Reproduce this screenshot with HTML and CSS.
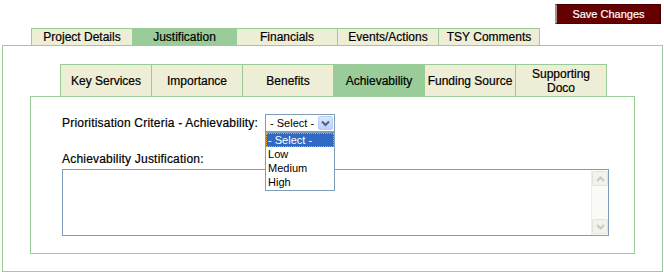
FILE: index.html
```html
<!DOCTYPE html>
<html>
<head>
  <title>Project Justification</title>
  <link rel="stylesheet" href="styles.css">
</head>
<body>
  <div class="topbar">
    <button class="save-btn">Save Changes</button>
  </div>

  <div class="tabs main-tabs">
    <div class="tab">Project Details</div>
    <div class="tab active wide">Justification</div>
    <div class="tab">Financials</div>
    <div class="tab">Events/Actions</div>
    <div class="tab">TSY Comments</div>
  </div>

  <div class="panel outer-panel">
    <div class="tabs sub-tabs">
      <div class="tab">Key Services</div>
      <div class="tab">Importance</div>
      <div class="tab">Benefits</div>
      <div class="tab active">Achievability</div>
      <div class="tab">Funding Source</div>
      <div class="tab">Supporting<br>Doco</div>
    </div>

    <div class="panel inner-panel">
      <div class="field-row">
        <label class="field-label" for="criteria">Prioritisation Criteria - Achievability:</label>
        <div class="select-wrap">
          <div class="select-box" id="criteria">
            <span>- Select -</span>
            <span class="select-arrow">
              <svg width="9" height="7" viewBox="0 0 9 7">
                <path d="M1 1.5 L4.5 5 L8 1.5" fill="none" stroke="#4d6185" stroke-width="2"/>
              </svg>
            </span>
          </div>
          <ul class="select-list">
            <li class="selected">- Select -</li>
            <li>Low</li>
            <li>Medium</li>
            <li>High</li>
          </ul>
        </div>
      </div>

      <label class="field-label block" for="justification">Achievability Justification:</label>
      <div class="memo">
        <textarea id="justification"></textarea>
        <div class="scrollbar">
          <span class="scroll-btn">
            <svg width="9" height="6" viewBox="0 0 9 6"><path d="M1 5 L4.5 1.5 L8 5" fill="none" stroke="#c9c9bf" stroke-width="2"/></svg>
          </span>
          <span class="scroll-btn">
            <svg width="9" height="6" viewBox="0 0 9 6"><path d="M1 1 L4.5 4.5 L8 1" fill="none" stroke="#c9c9bf" stroke-width="2"/></svg>
          </span>
        </div>
      </div>
    </div>
  </div>
</body>
</html>
```

FILE: styles.css
```css
body {
  margin: 0;
  font-family: "Liberation Sans", Arial, sans-serif;
  font-size: 12px;
  color: #000;
  background: #fff;
}

.topbar {
  display: flex;
  justify-content: flex-end;
  padding: 4px 3px 0 0;
  height: 20px;
}

.save-btn {
  box-sizing: border-box;
  width: 106px;
  height: 20px;
  padding: 0;
  background: #660000;
  color: #fff;
  font-family: "Liberation Sans", Arial, sans-serif;
  font-size: 11px;
  -webkit-text-stroke: 0.2px #fff;
  border: 1px solid #4a0000;
  border-left: 2px solid #a09494;
  cursor: pointer;
}

.tabs {
  display: flex;
}

.tab {
  box-sizing: border-box;
  display: flex;
  align-items: center;
  justify-content: center;
  text-align: center;
  margin-left: -1px;
  background: #eeeed6;
  border: 1px solid #99cc99;
  border-bottom: none;
  -webkit-text-stroke: 0.2px #000;
}

.tab:first-child {
  margin-left: 0;
}

.tab.active {
  background: #99cc99;
}

.main-tabs {
  margin: 4px 0 0 31px;
}

.main-tabs .tab {
  width: 102px;
  height: 17px;
}

.main-tabs .tab.wide {
  width: 105px;
}

.sub-tabs {
  margin-left: 30px;
}

.sub-tabs .tab {
  width: 92px;
  height: 32px;
  line-height: 14px;
}

.panel {
  box-sizing: border-box;
  border: 1px solid #99cc99;
}

.outer-panel {
  width: 661px;
  margin-left: 2px;
  padding: 18px 0 17px 27px;
}

.inner-panel {
  width: 605px;
  padding: 17px 0 17px 31px;
}

.field-row {
  display: flex;
  align-items: center;
  gap: 7px;
  height: 18px;
}

.field-label {
  letter-spacing: 0.2px;
  -webkit-text-stroke: 0.2px #000;
}

.field-label.block {
  display: block;
  margin-top: 20px;
  line-height: 14px;
}

.select-wrap {
  position: relative;
  font-size: 11px;
}

.select-box {
  box-sizing: border-box;
  display: flex;
  align-items: center;
  width: 70px;
  height: 18px;
  padding: 0 1px 0 4px;
  border: 1px solid #7f9db9;
  background: #fff;
}

.select-arrow {
  box-sizing: border-box;
  display: flex;
  align-items: center;
  justify-content: center;
  margin-left: auto;
  width: 15px;
  height: 14px;
  border: 1px solid #b8cdf7;
  border-radius: 2px;
  background: linear-gradient(#dce7fd, #bcd0f8);
}

.select-list {
  position: absolute;
  top: 18px;
  left: 0;
  box-sizing: border-box;
  width: 70px;
  margin: 0;
  padding: 0 0 1px 0;
  list-style: none;
  background: #fff;
  border: 1px solid #7f9db9;
}

.select-list li {
  height: 14px;
  line-height: 14px;
  padding-left: 2px;
}

.select-list li.selected {
  background: #316ac5;
  color: #fff;
  outline: 1px dotted #e8a33c;
  outline-offset: -1px;
}

.memo {
  box-sizing: border-box;
  display: flex;
  width: 547px;
  height: 67px;
  margin-top: 3px;
  border: 1px solid #7f9db9;
}

.memo textarea {
  flex: 1;
  border: none;
  resize: none;
  outline: none;
  padding: 2px;
  font-family: "Liberation Sans", Arial, sans-serif;
  font-size: 12px;
}

.scrollbar {
  box-sizing: border-box;
  display: flex;
  flex-direction: column;
  justify-content: space-between;
  width: 17px;
  padding: 1px 0;
  background: #fbfbf8;
  border-left: 1px solid #efeee6;
}

.scroll-btn {
  box-sizing: border-box;
  display: flex;
  align-items: center;
  justify-content: center;
  height: 15px;
  border: 1px solid #e4e3da;
  border-radius: 2px;
  background: #f3f3ee;
}
```
